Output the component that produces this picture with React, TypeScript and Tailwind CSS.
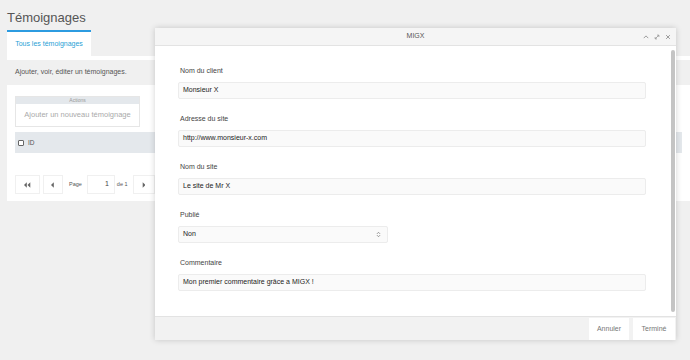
import React from 'react';

const fields = [
  { label: 'Nom du client', value: 'Monsieur X' },
  { label: 'Adresse du site', value: 'http://www.monsieur-x.com' },
  { label: 'Nom du site', value: 'Le site de Mr X' },
];

function Field({ label, value, select }: { label: string; value: string; select?: boolean }) {
  return (
    <div className="mb-[15px]">
      <div className="h-[9px] leading-[9px] text-[7px] text-[#444] mb-[7px] pl-[2px]">{label}</div>
      <div
        className={`h-[17px] border border-[#ececec] bg-[#fafafa] rounded-[2px] px-[4px] flex items-center justify-between text-[7px] text-[#222] ${
          select ? 'w-[210px]' : 'w-[468px]'
        }`}
      >
        <span>{value}</span>
        {select && (
          <svg viewBox="0 0 8 10" width="5" height="7" fill="none" stroke="#777" strokeWidth="1.2" className="mr-[2px]">
            <path d="M1.5 4 L4 1.5 L6.5 4" />
            <path d="M1.5 6 L4 8.5 L6.5 6" />
          </svg>
        )}
      </div>
    </div>
  );
}

export default function App() {
  return (
    <div
      className="relative w-[690px] h-[360px] overflow-hidden bg-[#f0f0f0]"
      style={{ fontFamily: '"Liberation Sans", Arial, sans-serif' }}
    >
      {/* Page */}
      <div className="pl-[7px]">
        <h1 className="pt-[10px] h-[30px] text-[13px] leading-[16px] text-[#555]">Témoignages</h1>

        {/* Tabs */}
        <div className="flex">
          <div className="w-[84px] h-[26px] border-t-2 border-[#2c9be0] bg-white flex items-center justify-center text-[7px] text-[#2a9fd6]">
            Tous les témoignages
          </div>
        </div>

        {/* Panel */}
        <div className="bg-white pt-[4px] pb-[7px]">
          <div className="h-[25px] bg-[#f0f0f0] px-[8px] flex items-center text-[7px] text-[#555]">
            Ajouter, voir, éditer un témoignages.
          </div>

          <div className="px-[8px] pt-[11px]">
            <div className="w-[125px] border border-[#e6e6e6]">
              <div className="h-[7px] bg-[#e4e8ec] flex items-center justify-center text-[5px] text-[#999]">Actions</div>
              <div className="h-[22px] flex items-center justify-center text-[7.5px] text-[#aaa]">
                Ajouter un nouveau témoignage
              </div>
            </div>

            <div className="mt-[5px] h-[21px] bg-[#e4e8ec] flex items-center gap-[4px] pl-[3px] text-[6.5px] text-[#555]">
              <span className="w-[6px] h-[6px] border border-[#666] rounded-[1px] bg-white" />
              <span>ID</span>
            </div>

            {/* Pagination */}
            <div className="mt-[22px] h-[19px] flex items-center text-[5.5px] text-[#555]">
              <div className="w-[25px] h-[19px] border border-[#f0f0f0] flex items-center justify-center">
                <svg viewBox="0 0 10 8" width="7" height="6" fill="#666">
                  <path d="M4 0 L0 4 L4 8 Z M9 0 L5 4 L9 8 Z" />
                </svg>
              </div>
              <div className="ml-[3px] w-[20px] h-[19px] border border-[#f0f0f0] flex items-center justify-center">
                <svg viewBox="0 0 5 8" width="3.5" height="6" fill="#666">
                  <path d="M4 0 L0 4 L4 8 Z" />
                </svg>
              </div>
              <span className="ml-[6px]">Page</span>
              <div className="ml-[5px] w-[28px] h-[19px] border border-[#f0f0f0] flex items-center justify-end pr-[5px] text-[7px] text-[#444]">
                1
              </div>
              <span className="ml-[2px]">de 1</span>
              <div className="ml-[5px] w-[22px] h-[19px] border border-[#f0f0f0] flex items-center justify-center">
                <svg viewBox="0 0 5 8" width="3.5" height="6" fill="#666">
                  <path d="M1 0 L5 4 L1 8 Z" />
                </svg>
              </div>
            </div>
          </div>
        </div>
      </div>

      {/* MIGX modal */}
      <div className="absolute left-[155px] top-[28px] w-[521px] h-[312px] flex flex-col bg-white shadow-[0_0_6px_rgba(0,0,0,0.18)]">
        <div className="relative h-[18px] bg-[#f5f5f5] border-b border-[#e3e3e3] flex items-center justify-center text-[7px] text-[#555]">
          MIGX
          <div className="absolute right-[5px] top-0 h-full flex items-center gap-[5px]">
            <svg viewBox="0 0 8 8" width="6" height="6" fill="none" stroke="#999" strokeWidth="1.3">
              <path d="M1 5.5 L4 2.5 L7 5.5" />
            </svg>
            <svg viewBox="0 0 8 8" width="6" height="6" fill="none" stroke="#999" strokeWidth="1.1">
              <path d="M1.5 6.5 L6.5 1.5 M4 1.5 L6.5 1.5 L6.5 4 M1.5 4 L1.5 6.5 L4 6.5" />
            </svg>
            <svg viewBox="0 0 8 8" width="6" height="6" fill="none" stroke="#999" strokeWidth="1.3">
              <path d="M1.5 1.5 L6.5 6.5 M6.5 1.5 L1.5 6.5" />
            </svg>
          </div>
        </div>

        <div className="flex-1 flex">
          <div className="flex-1 pl-[23px] pt-[20px]">
            {fields.map((f) => (
              <Field key={f.label} label={f.label} value={f.value} />
            ))}
            <Field label="Publié" value="Non" select />
            <Field label="Commentaire" value="Mon premier commentaire grâce a MIGX !" />
          </div>
          <div className="w-[7px] py-[4px] flex justify-center">
            <div className="w-[4px] h-full rounded-full bg-[#c4c4c4]" />
          </div>
        </div>

        <div className="h-[24px] bg-[#f2f2f2] border-t border-[#e3e3e3] flex items-end justify-end gap-[4px] pr-[1px]">
          <div className="w-[40px] h-[22px] bg-white flex items-center justify-center text-[7px] text-[#777]">Annuler</div>
          <div className="w-[42px] h-[22px] bg-white flex items-center justify-center text-[7px] text-[#777]">Terminé</div>
        </div>
      </div>
    </div>
  );
}
